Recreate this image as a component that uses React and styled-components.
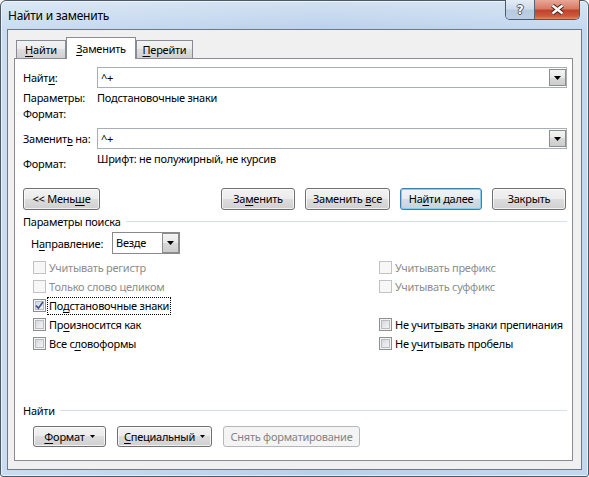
import styled, { createGlobalStyle } from "styled-components"

const GlobalStyle = createGlobalStyle`
  html, body { margin: 0; padding: 0; }
  body {
    font-family: "Noto Sans", "Open Sans", "DejaVu Sans", sans-serif;
    font-size: 11px;
    letter-spacing: -0.25px;
    color: #000;
    background: #fff;
    white-space: nowrap;
  }
  * { box-sizing: border-box; }
`

const Window = styled.div`
  width: 589px;
  height: 477px;
  display: flex;
  flex-direction: column;
  padding: 0 6px 6px;
  border: 1px solid #4a5a6b;
  border-radius: 6px 6px 3px 3px;
  background:
    linear-gradient(180deg, rgba(255, 255, 255, 0.35) 0, rgba(255, 255, 255, 0) 30px),
    linear-gradient(90deg, #c9dcf1 0%, #bad1eb 55%, #c3d8ef 100%);
  box-shadow: inset 0 0 0 1px rgba(255, 255, 255, 0.6);
`

const TitleBar = styled.div`
  height: 28px;
  display: flex;
  align-items: flex-start;
  justify-content: space-between;
`

const Title = styled.div`
  padding: 7px 0 0 1px;
  line-height: 16px;
  font-size: 12px;
`

const CaptionButtons = styled.div`
  display: flex;
  height: 20px;
  margin: -1px 2px 0 0;
  border: 1px solid #4b5a6c;
  border-top: none;
  border-radius: 0 0 5px 5px;
  overflow: hidden;
`

const CaptionButton = styled.div`
  width: ${p => p.$w}px;
  display: flex;
  align-items: center;
  justify-content: center;
  background: ${p => p.$close
    ? "linear-gradient(180deg, #e8a796 0%, #d87b66 45%, #c2422b 55%, #cc5a41 85%, #dc8a66 100%)"
    : "linear-gradient(180deg, #e3ecf6 0%, #cfdcec 45%, #b8cadf 55%, #bccfe5 100%)"};
  & + & { border-left: 1px solid #55657a; }
`

const HelpGlyph = styled.span`
  color: #fff;
  font-family: "DejaVu Sans", sans-serif;
  font-weight: bold;
  font-size: 12px;
  line-height: 12px;
  text-shadow: 1px 0 0 #4d5866, -1px 0 0 #4d5866, 0 1px 0 #4d5866, 0 -1px 0 #4d5866;
`

const Client = styled.div`
  flex: 1;
  display: flex;
  flex-direction: column;
  border: 1px solid #6f7884;
  background: #f0f0f0;
  padding: 7px 8px 8px 6px;
`

const TabStrip = styled.div`
  display: flex;
  align-items: flex-end;
  height: 21px;
  padding-left: 2px;
`

const Tab = styled.div`
  position: relative;
  z-index: ${p => (p.$active ? 1 : 0)};
  width: ${p => p.$w}px;
  height: ${p => (p.$active ? 22 : 18)}px;
  margin-bottom: ${p => (p.$active ? -1 : 0)}px;
  padding-top: ${p => (p.$active ? 3 : 1)}px;
  border: 1px solid #898c95;
  border-bottom: none;
  text-align: center;
  line-height: 15px;
  background: ${p => (p.$active
    ? "#fff"
    : "linear-gradient(180deg, #f3f3f3 0%, #ebebeb 50%, #dedede 50%, #d0d0d0 100%)")};
`

const Panel = styled.div`
  flex: 1;
  display: flex;
  flex-direction: column;
  border: 1px solid #898c95;
  background: #fff;
  padding: 8px 5px 13px 8px;
`

const U = styled.span`
  text-decoration: underline;
  text-underline-offset: 2px;
`

const FieldRow = styled.div`
  display: grid;
  grid-template-columns: 74px 1fr;
  align-items: center;
  height: 21px;
  margin-top: ${p => p.$mt || 0}px;
`

const InfoRow = styled.div`
  display: grid;
  grid-template-columns: 74px 1fr;
  align-items: start;
  line-height: 16px;
  margin-top: ${p => p.$mt || 0}px;
`

const InfoLabel = styled.span`
  padding-top: ${p => p.$pt || 0}px;
`

const Combo = styled.div`
  display: flex;
  align-items: center;
  width: ${p => (p.$w ? `${p.$w}px` : "auto")};
  height: ${p => p.$h || 21}px;
  padding: 1px 0 1px 3px;
  border: 1px solid ${p => p.$border || "#a9adb4"};
  background: #fff;
`

const ComboText = styled.span`
  flex: 1;
  line-height: 16px;
`

const DropButton = styled.div`
  width: 17px;
  height: ${p => p.$h || 17}px;
  display: flex;
  align-items: center;
  justify-content: center;
  border: 1px solid #8d8d8d;
  background: linear-gradient(180deg, #f4f4f4 0%, #e8e8e8 50%, #d9d9d9 50%, #cdcdcd 100%);
`

const ArrowSvg = styled.svg`
  flex: none;
  margin-left: ${p => p.$ml || 0}px;
`

const Arrow = ({ w = 7, h = 4, ml }) => (
  <ArrowSvg $ml={ml} width={w} height={h} viewBox={`0 0 ${w} ${h}`}>
    <path d={`M0 0H${w}L${w / 2} ${h}Z`} fill="#000" />
  </ArrowSvg>
)

const ActionRow = styled.div`
  display: flex;
  justify-content: space-between;
  margin-top: 16px;
  padding-right: 1px;
`

const ButtonGroup = styled.div`
  display: flex;
  gap: 10px;
`

const Button = styled.div`
  width: ${p => p.$w}px;
  height: ${p => p.$h || 22}px;
  display: flex;
  align-items: center;
  justify-content: center;
  border: 1px solid ${p => (p.$default ? "#3c7fb1" : p.$disabled ? "#b5b9bc" : "#707070")};
  border-radius: 3px;
  color: ${p => (p.$disabled ? "#838383" : "#000")};
  background: ${p => (p.$disabled
    ? "#f4f4f4"
    : p.$default
      ? "linear-gradient(180deg, #f0f4f7 0%, #e6ecf0 50%, #d6dee4 50%, #c9d3da 100%)"
      : "linear-gradient(180deg, #f2f2f2 0%, #ebebeb 50%, #dddddd 50%, #cfcfcf 100%)")};
  box-shadow: ${p => (p.$default
    ? "inset 0 0 0 1px #7fd0f5"
    : p.$disabled ? "none" : "inset 0 0 0 1px rgba(255, 255, 255, 0.7)")};
  line-height: 16px;
`

const GroupHeader = styled.div`
  display: flex;
  align-items: center;
  height: 16px;
  margin-top: ${p => p.$mt || 0}px;
  line-height: 16px;
  &::after {
    content: "";
    flex: 1;
    height: 1px;
    margin: -2px 0 0 5px;
    background: #d5dfe5;
  }
`

const DirectionRow = styled.div`
  display: grid;
  grid-template-columns: 81px auto;
  justify-content: start;
  align-items: center;
  margin-top: 2px;
  padding-left: 8px;
`

const CheckGrid = styled.div`
  display: grid;
  grid-template-columns: 346px 1fr;
  grid-auto-rows: 19px;
  margin-top: 4px;
  padding-left: 10px;
`

const CheckItem = styled.div`
  display: flex;
  align-items: center;
  color: ${p => (p.$disabled ? "#8d8d8d" : "#000")};
`

const Box = styled.span`
  width: 13px;
  height: 13px;
  margin-right: 2px;
  display: flex;
  align-items: center;
  justify-content: center;
  border: 1px solid ${p => (p.$disabled ? "#c2c2c2" : "#8e8f8f")};
  background: ${p => (p.$disabled
    ? "#f7f7f7"
    : "linear-gradient(135deg, #cbcfd5 0%, #e8e9eb 55%, #f8f8f8 100%)")};
  box-shadow: ${p => (p.$disabled ? "none" : "inset 0 0 0 1px #f4f4f4, inset 0 0 0 2px #b9bdc2")};
`

const CheckText = styled.span`
  padding: 0 1px;
  line-height: 16px;
  outline: ${p => (p.$focus ? "1px dotted #000" : "none")};
`

const BottomSection = styled.div`
  margin-top: auto;
`

const BottomButtons = styled.div`
  display: flex;
  gap: 11px;
  margin-top: 7px;
  padding-left: 10px;
`

const Check = ({ disabled, checked, focus, children }) => (
  <CheckItem $disabled={disabled}>
    <Box $disabled={disabled}>
      {checked && (
        <svg width="9" height="9" viewBox="0 0 9 9">
          <path d="M1 4.6L3.4 7.2L8 1" fill="none" stroke="#3e5594" strokeWidth="1.7" />
        </svg>
      )}
    </Box>
    <CheckText $focus={focus}>{children}</CheckText>
  </CheckItem>
)

export default function App() {
  return (
    <>
      <GlobalStyle />
      <Window>
        <TitleBar>
          <Title>Найти и заменить</Title>
          <CaptionButtons>
            <CaptionButton $w={28}>
              <HelpGlyph>?</HelpGlyph>
            </CaptionButton>
            <CaptionButton $w={45} $close>
              <svg width="15" height="11" viewBox="0 0 15 11">
                <path d="M2.5 1.5L12.5 9.5M12.5 1.5L2.5 9.5" stroke="#4a2118" strokeWidth="4.4" />
                <path d="M2.5 1.5L12.5 9.5M12.5 1.5L2.5 9.5" stroke="#fff" strokeWidth="2.4" />
              </svg>
            </CaptionButton>
          </CaptionButtons>
        </TitleBar>

        <Client>
          <TabStrip>
            <Tab $w={50}><U>Н</U>айти</Tab>
            <Tab $w={70} $active><U>З</U>аменить</Tab>
            <Tab $w={57}><U>П</U>ерейти</Tab>
          </TabStrip>

          <Panel>
            <FieldRow>
              <span>Найт<U>и</U>:</span>
              <Combo>
                <ComboText>^+</ComboText>
                <DropButton><Arrow /></DropButton>
              </Combo>
            </FieldRow>
            <InfoRow $mt={2}>
              <span>Параметры:</span>
              <span>Подстановочные знаки</span>
            </InfoRow>
            <InfoRow>
              <span>Формат:</span>
              <span />
            </InfoRow>

            <FieldRow $mt={6}>
              <span>Заменит<U>ь</U> на:</span>
              <Combo>
                <ComboText>^+</ComboText>
                <DropButton><Arrow /></DropButton>
              </Combo>
            </FieldRow>
            <InfoRow $mt={2}>
              <InfoLabel $pt={5}>Формат:</InfoLabel>
              <span>Шрифт: не полужирный, не курсив</span>
            </InfoRow>

            <ActionRow>
              <Button $w={77}><span>&lt;&lt; Мень<U>ш</U>е</span></Button>
              <ButtonGroup>
                <Button $w={74}><span>За<U>м</U>енить</span></Button>
                <Button $w={85}><span>Заменить <U>в</U>се</span></Button>
                <Button $w={82} $default><span>На<U>й</U>ти далее</span></Button>
                <Button $w={74}><span>Закрыть</span></Button>
              </ButtonGroup>
            </ActionRow>

            <GroupHeader $mt={4}>Параметры поиска</GroupHeader>

            <DirectionRow>
              <span>Н<U>а</U>правление:</span>
              <Combo $w={68} $h={22} $border="#8a8a8a">
                <ComboText>Везде</ComboText>
                <DropButton $h={20}><Arrow /></DropButton>
              </Combo>
            </DirectionRow>

            <CheckGrid>
              <Check disabled>Учитывать регистр</Check>
              <Check disabled>Учитывать префикс</Check>
              <Check disabled>Только слово целиком</Check>
              <Check disabled>Учитывать суффикс</Check>
              <Check checked focus>По<U>д</U>становочные знаки</Check>
              <span />
              <Check>Пр<U>о</U>износится как</Check>
              <Check>Не учит<U>ы</U>вать знаки препинания</Check>
              <Check>Все с<U>л</U>овоформы</Check>
              <Check>Не у<U>ч</U>итывать пробелы</Check>
            </CheckGrid>

            <BottomSection>
              <GroupHeader>Найти</GroupHeader>
              <BottomButtons>
                <Button $w={73} $h={21}><span><U>Ф</U>ормат</span><Arrow w={5} h={3} ml={5} /></Button>
                <Button $w={95} $h={21}><span><U>С</U>пециальный</span><Arrow w={5} h={3} ml={5} /></Button>
                <Button $w={137} $h={21} $disabled><span>Снять форматирование</span></Button>
              </BottomButtons>
            </BottomSection>
          </Panel>
        </Client>
      </Window>
    </>
  )
}
